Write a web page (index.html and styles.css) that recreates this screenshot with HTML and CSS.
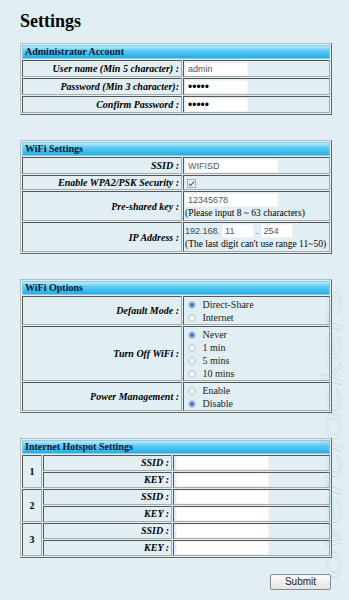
FILE: index.html
```html
<!DOCTYPE html>
<html lang="en">
<head>
    <meta charset="UTF-8">
    <meta name="viewport" content="width=device-width, initial-scale=1.0">
    <title>Settings</title>
    <link rel="stylesheet" href="styles.css">
</head>
<body>
    <div class="page">
    <h1 class="title">Settings</h1>

    <form id="settings-form">
    <table class="box">
        <colgroup><col class="c-lbl"><col></colgroup>
        <tr><th colspan="2" class="head">Administrator Account</th></tr>
        <tr>
            <td class="lbl">User name (Min 5 character) :</td>
            <td class="val"><input type="text" class="txt small" value="admin"></td>
        </tr>
        <tr>
            <td class="lbl">Password (Min 3 character):</td>
            <td class="val"><input type="password" class="txt small pw" value="admin"></td>
        </tr>
        <tr>
            <td class="lbl">Confirm Password :</td>
            <td class="val"><input type="password" class="txt small pw" value="admin"></td>
        </tr>
    </table>

    <table class="box">
        <colgroup><col class="c-lbl"><col></colgroup>
        <tr><th colspan="2" class="head">WiFi Settings</th></tr>
        <tr>
            <td class="lbl">SSID :</td>
            <td class="val"><input type="text" class="txt wide" value="WIFISD"></td>
        </tr>
        <tr>
            <td class="lbl">Enable WPA2/PSK Security :</td>
            <td class="val"><input type="checkbox" class="chk" checked></td>
        </tr>
        <tr>
            <td class="lbl">Pre-shared key :</td>
            <td class="val">
                <input type="text" class="txt wide" value="12345678">
                <div class="note">(Please input 8 ~ 63 characters)</div>
            </td>
        </tr>
        <tr>
            <td class="lbl">IP Address :</td>
            <td class="val">
                <div class="ip"><span class="sans">192.168.</span><input type="text" class="txt part" value="11"><span class="sans">.</span><input type="text" class="txt part" value="254"></div>
                <div class="note">(The last digit can't use range 11~50)</div>
            </td>
        </tr>
    </table>

    <table class="box">
        <colgroup><col class="c-lbl"><col></colgroup>
        <tr><th colspan="2" class="head">WiFi Options</th></tr>
        <tr>
            <td class="lbl">Default Mode :</td>
            <td class="val">
                <label class="opt"><input type="radio" name="mode" checked> Direct-Share</label>
                <label class="opt"><input type="radio" name="mode"> Internet</label>
            </td>
        </tr>
        <tr>
            <td class="lbl">Turn Off WiFi :</td>
            <td class="val">
                <label class="opt"><input type="radio" name="off" checked> Never</label>
                <label class="opt"><input type="radio" name="off"> 1 min</label>
                <label class="opt"><input type="radio" name="off"> 5 mins</label>
                <label class="opt"><input type="radio" name="off"> 10 mins</label>
            </td>
        </tr>
        <tr>
            <td class="lbl">Power Management :</td>
            <td class="val">
                <label class="opt"><input type="radio" name="power"> Enable</label>
                <label class="opt"><input type="radio" name="power" checked> Disable</label>
            </td>
        </tr>
    </table>

    <table class="box hotspot">
        <colgroup><col class="c-num"><col class="c-key"><col></colgroup>
        <tr><th colspan="3" class="head">Internet Hotspot Settings</th></tr>
        <tr>
            <td rowspan="2" class="num">1</td>
            <td class="lbl">SSID :</td>
            <td class="val"><input type="text" class="txt wide"></td>
        </tr>
        <tr>
            <td class="lbl">KEY :</td>
            <td class="val"><input type="text" class="txt wide"></td>
        </tr>
        <tr>
            <td rowspan="2" class="num">2</td>
            <td class="lbl">SSID :</td>
            <td class="val"><input type="text" class="txt wide"></td>
        </tr>
        <tr>
            <td class="lbl">KEY :</td>
            <td class="val"><input type="text" class="txt wide"></td>
        </tr>
        <tr>
            <td rowspan="2" class="num">3</td>
            <td class="lbl">SSID :</td>
            <td class="val"><input type="text" class="txt wide"></td>
        </tr>
        <tr>
            <td class="lbl">KEY :</td>
            <td class="val"><input type="text" class="txt wide"></td>
        </tr>
    </table>

    <div class="actions">
        <button type="submit" class="btn">Submit</button>
    </div>
    </form>
    </div>

    <div class="mark" aria-hidden="true">overclockers</div>
</body>
</html>
```

FILE: styles.css
```css
body {
    margin: 0;
    background-color: #e1eff4;
    font-family: "Liberation Serif", "DejaVu Serif", serif;
    color: #000;
}

.page {
    width: 312px;
    padding: 0 0 0 20px;
}

.title {
    font-family: "Liberation Serif", "DejaVu Serif", serif;
    font-size: 18px;
    line-height: 20px;
    margin: 0;
    padding: 11px 0 12px 0;
}

/* old style bordered tables */
.box {
    width: 312px;
    table-layout: fixed;
    border: 1px outset #bbb;
    border-spacing: 1px;
    margin-bottom: 25px;
}

.c-lbl {
    width: 160px;
}

.c-num {
    width: 20px;
}

.c-key {
    width: 129px;
}

.box td {
    border: 1px inset #aaa;
    padding: 1px 2px 0;
    font-size: 10px;
    line-height: 12px;
}

.hotspot td,
.box.hotspot td.val {
    padding: 0 2px;
}

.head {
    background: linear-gradient(#bfeafa, #5ccaf3 40%, #25ade6);
    text-align: left;
    font-size: 10px;
    line-height: 12px;
    font-weight: bold;
    padding: 0 2px;
    height: 12px;
    border: 1px solid #7fcff0;
    color: #0a1a30;
}

.box td.lbl {
    text-align: right;
    font-weight: bold;
    font-style: italic;
    font-size: 10px;
    white-space: nowrap;
}

.box td.val {
    text-align: left;
    padding: 1px 1px 0;
}

.txt {
    box-sizing: border-box;
    border: 1px solid #f4f4f4;
    background: #fff;
    height: 14px;
    padding: 0 2px;
    font-family: "Liberation Sans", Arial, sans-serif;
    font-size: 9px;
    color: #555;
    margin: 0;
    vertical-align: middle;
}

.pw {
    font-size: 12px;
    color: #000;
}

.small {
    width: 63px;
}

.wide {
    width: 93px;
}

.part {
    width: 32px;
    margin: 0 2px;
}

.ip {
    height: 14px;
    white-space: nowrap;
}

.sans {
    font-family: "Liberation Sans", Arial, sans-serif;
    font-size: 9px;
    color: #444;
    vertical-align: middle;
}

.note {
    font-size: 9.5px;
    line-height: 13px;
    white-space: nowrap;
}

.chk {
    appearance: none;
    width: 9px;
    height: 9px;
    margin: 1px 2px;
    border: 1px solid #aab;
    background: #f0f2f8;
    position: relative;
    vertical-align: middle;
}

.chk:checked::after {
    content: "";
    position: absolute;
    left: 2px;
    top: 0px;
    width: 2px;
    height: 5px;
    border: solid #2f4f9f;
    border-width: 0 1.5px 1.5px 0;
    transform: rotate(40deg);
}

.opt {
    display: block;
    font-size: 10px;
    line-height: 13px;
    color: #222;
}

.opt input {
    appearance: none;
    width: 8px;
    height: 8px;
    border-radius: 50%;
    border: 1px solid #b8c4cc;
    background: #eef3f6;
    margin: 0 4px 0 3px;
    vertical-align: -1px;
}

.opt input:checked {
    background: radial-gradient(circle, #2f6fc0 0, #4a8ad8 2px, #cfe0f0 3px);
}

.hotspot .num {
    text-align: center;
    font-weight: bold;
}

.actions {
    text-align: right;
    padding-right: 1px;
    margin-top: -12px;
}

.btn {
    width: 61px;
    height: 16px;
    padding: 0;
    font-family: "Liberation Sans", Arial, sans-serif;
    font-size: 10px;
    background: linear-gradient(#fbfbfb, #e4e4e4);
    border: 1px solid #8a8a8a;
    border-radius: 2px;
    color: #222;
}

/* faint site watermark down the right edge */
.mark {
    position: absolute;
    top: 355px;
    right: 3px;
    writing-mode: vertical-rl;
    transform: scaleY(1.85) rotate(180deg);
    font-family: "Liberation Sans", Arial, sans-serif;
    font-style: italic;
    font-size: 28px;
    line-height: 28px;
    color: transparent;
    -webkit-text-stroke: 0.6px rgba(150, 170, 180, 0.3);
    pointer-events: none;
}
```
